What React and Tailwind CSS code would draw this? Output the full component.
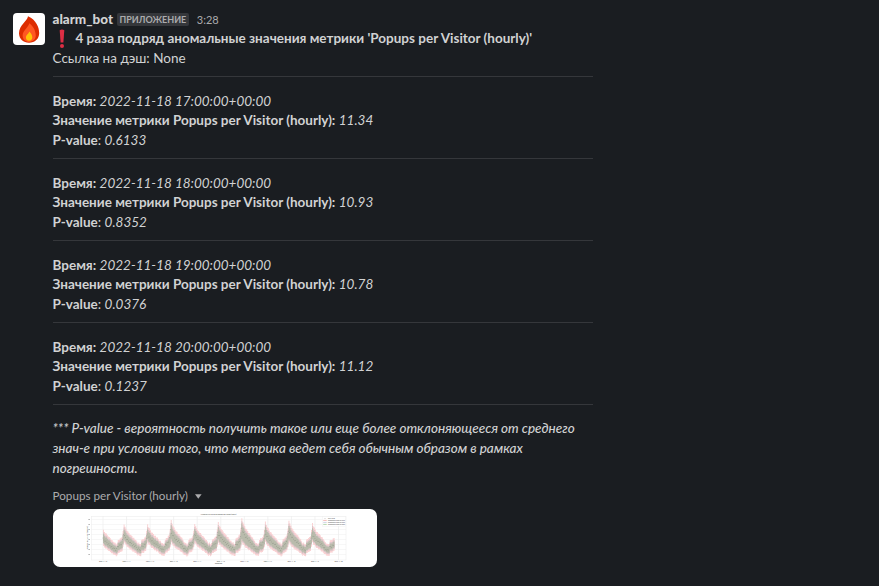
import React from "react";

const entries = [
  ["2022-11-18 17:00:00+00:00", "11.34", "0.6133"],
  ["2022-11-18 18:00:00+00:00", "10.93", "0.8352"],
  ["2022-11-18 19:00:00+00:00", "10.78", "0.0376"],
  ["2022-11-18 20:00:00+00:00", "11.12", "0.1237"],
];

// Chart drawing, in pixels of the 324x58 preview card.
const DAY = 23.55;
const START = 50;
const HOURS = 236;
const peaks = [15.3, 15.3, 11.5, 14.5, 13, 9.5, 13, 11.5, 14, 19];
const shape = [0.7, 0.62, 0.57, 0.52, 0.46, 0.42, 0.36, 0.32, 0.26, 0.2, 0.14, 0.07, 0.08, 0.02, 0.04, 0.22, 0.26, 0.28, 0.34, 0.4, 0.66, 1, 0.86, 0.78];

const hours = Array.from({ length: HOURS }, (_, i) => {
  const day = i < 12 ? 0 : Math.min(9, Math.floor((i - 10) / 24));
  const v = shape[i % 24];
  const jitter = (((i * 37) % 11) - 5) / 10;
  const top = peaks[day];
  return {
    x: START + (i * DAY) / 24,
    outerTop: 35.5 - v * (35.5 - top) + jitter,
    outerBottom: 47.3 - v * 14 + jitter,
    midTop: 37 - v * (34 - top) + jitter,
    midBottom: 45.5 - v * 14 + jitter,
    innerTop: 38.2 - v * (33 - top) + jitter,
    innerBottom: 44.2 - v * 14 + jitter,
    value: 41 - v * (31 - top) + jitter * 2,
  };
});

function band(top, bottom) {
  const w = DAY / 24;
  const up = hours.map((h) => `${h.x},${h[top]} ${h.x + w},${h[top]}`);
  const down = [...hours].reverse().map((h) => `${h.x + w},${h[bottom]} ${h.x},${h[bottom]}`);
  return [...up, ...down].join(" ");
}

function Chart() {
  const ticks = Array.from({ length: 11 }, (_, i) => START + i * DAY);
  const rows = [10.5, 15.5, 20.5, 25.5, 30.5, 35.5, 40.5, 45.5];
  return (
    <svg width="324" height="58" viewBox="0 0 324 58" className="block">
      <rect x="38.5" y="7.5" width="254.5" height="43.5" fill="none" stroke="#ededed" strokeWidth="0.6" />
      {ticks.map((x) => (
        <line key={x} x1={x} x2={x} y1="7.5" y2="51" stroke="#e4e4e4" strokeWidth="0.5" />
      ))}
      {rows.map((y) => (
        <g key={y}>
          <line x1="38.5" x2="293" y1={y} y2={y} stroke="#efefef" strokeWidth="0.5" />
          <rect x="35.4" y={y - 0.4} width="1.5" height="0.9" fill="#aaaaaa" />
        </g>
      ))}
      <polygon points={band("outerTop", "outerBottom")} fill="#fad2d3" />
      <polygon points={band("midTop", "midBottom")} fill="#dcc6cb" />
      <polygon points={band("innerTop", "innerBottom")} fill="#b9bbac" />
      {hours.map((h) => (
        <circle key={h.x} cx={h.x} cy={h.value} r="0.45" fill="#8a8f83" />
      ))}
      <g fontFamily="Lato, sans-serif" textAnchor="middle" fill="#333333">
        {ticks.map((x, i) => (
          <text key={x} x={x} y="53.2" fontSize="1.8" textLength="8" lengthAdjust="spacingAndGlyphs">{`2022-11-${10 + i}`}</text>
        ))}
        <text x="165.5" y="55.1" fontSize="1.9" textLength="7" lengthAdjust="spacingAndGlyphs">timestamp</text>
        <text x="165.5" y="6.3" fontSize="2" textLength="36" lengthAdjust="spacingAndGlyphs">Аномальные значения Popups per Visitor (hourly)</text>
        <text transform="translate(34.5 29) rotate(-90)" fontSize="2">Popups per Visitor (hourly)</text>
      </g>
      <rect x="269.5" y="7.7" width="23" height="9.5" fill="#ffffff" stroke="#eeeeee" strokeWidth="0.4" />
      <circle cx="272" cy="9.3" r="0.4" fill="#777777" />
      <rect x="270.2" y="10.9" width="3.5" height="1" fill="#f6b8b8" />
      <rect x="270.2" y="12.9" width="3.5" height="1" fill="#cfd3e6" />
      <rect x="270.2" y="14.9" width="3.5" height="1" fill="#b4d8b0" />
      <g fontFamily="Lato, sans-serif" fontSize="1.9" fill="#444444">
        <text x="275" y="10" textLength="7" lengthAdjust="spacingAndGlyphs">real value</text>
        <text x="275" y="12.1" textLength="17" lengthAdjust="spacingAndGlyphs">confidence interval 99%</text>
        <text x="275" y="14.1" textLength="17" lengthAdjust="spacingAndGlyphs">confidence interval 95%</text>
        <text x="275" y="16.1" textLength="17" lengthAdjust="spacingAndGlyphs">confidence interval 90%</text>
      </g>
    </svg>
  );
}

function Flame() {
  return (
    <svg width="32" height="32" viewBox="0 0 32 32" className="block">
      <path d="M15 3.2C14.5 8 6 12 6 20.3C6 26 10.5 29.8 16 29.8C21.8 29.8 26.2 25.8 26.2 20C26.2 14.5 23.2 6.8 15 3.2Z" fill="#dd2c00" />
      <path d="M16.2 10.2C15.8 14 9.6 17.4 9.6 22.4C9.6 26.6 12.8 28.9 16.2 28.9C19.8 28.9 22.8 26.4 22.8 22.6C22.8 18.5 20.8 13.2 16.2 10.2Z" fill="#ff5722" />
      <path d="M16.2 18.4C16 20.6 12.9 21.8 12.9 24.5C12.9 26.5 14.3 27.8 16.1 27.8C18 27.8 19.3 26.4 19.3 24.5C19.3 22.6 18.4 20.2 16.2 18.4Z" fill="#ffc107" />
    </svg>
  );
}

export default function App() {
  return (
    <div className="h-[586px] w-[879px] overflow-hidden bg-[#1a1d21] pl-[13px] pt-[10px] font-['Lato',sans-serif] text-[13.5px] leading-[19.7px] text-[#d1d2d3]">
      <div className="flex">
        <div className="mt-[3px] h-8 w-8 shrink-0 overflow-hidden rounded-[4px] bg-white">
          <Flame />
        </div>
        <div className="ml-2 w-[540px] whitespace-nowrap">
          <div className="flex h-[18px] items-center">
            <span className="-ml-[0.5px] font-black leading-[18px]">alarm_bot</span>
            <span className="ml-[3.5px] flex h-[13px] items-center rounded-[2px] bg-[#35373b] px-[3px] text-[9px] font-bold leading-[13px] text-[#ababad]">ПРИЛОЖЕНИЕ</span>
            <span className="ml-[7.5px] pt-px text-[11px] text-[#ababad]">3:28</span>
          </div>
          <div className="flex h-5 items-center font-bold">
            <svg width="19" height="20" viewBox="0 0 19 20" className="mr-1 shrink-0">
              <path d="M6.7 2.3Q9 .9 11.3 2.3L10.4 14.6H7.6Z" fill="#dd2e44" />
              <circle cx="9" cy="17.9" r="2" fill="#dd2e44" />
            </svg>
            <span className="-ml-[0.5px] pt-[2px]">4 раза подряд аномальные значения метрики 'Popups per Visitor (hourly)'</span>
          </div>
          <div className="-ml-[0.5px] h-5 pt-px">Ссылка на дэш: None</div>
          <div className="mt-2 h-px bg-[#35373b]" />
          {entries.map(([time, value, p]) => (
            <div key={time} className="flex h-[82px] flex-col border-b border-[#35373b] pt-[15px]">
              <div className="-ml-[0.5px] h-[19px]"><b>Время:</b> <i>{time}</i></div>
              <div className="-ml-[0.5px] h-5"><b>Значение метрики Popups per Visitor (hourly):</b> <i>{value}</i></div>
              <div className="-ml-[0.5px]"><b>P-value</b>: <i>{p}</i></div>
            </div>
          ))}
          <div className="-ml-[0.5px] mt-[13px] font-medium italic leading-5 tracking-[-0.02px]">
            <div>*** P-value - вероятность получить такое или еще более отклоняющееся от среднего</div>
            <div>знач-е при условии того, что метрика ведет себя обычным образом в рамках</div>
            <div>погрешности.</div>
          </div>
          <div className="mt-2 flex h-5 items-center text-[11.7px] text-[#ababad]">
            <span className="-ml-[0.5px]">Popups per Visitor (hourly)</span>
            <svg width="7" height="5" viewBox="0 0 7 5" className="ml-[7.5px]"><path d="M0 .2H6.6L3.3 4.8Z" fill="#ababad" /></svg>
          </div>
          <div className="mt-[3px] h-[58px] w-[324px] overflow-hidden rounded-[7px] bg-white">
            <Chart />
          </div>
        </div>
      </div>
    </div>
  );
}
